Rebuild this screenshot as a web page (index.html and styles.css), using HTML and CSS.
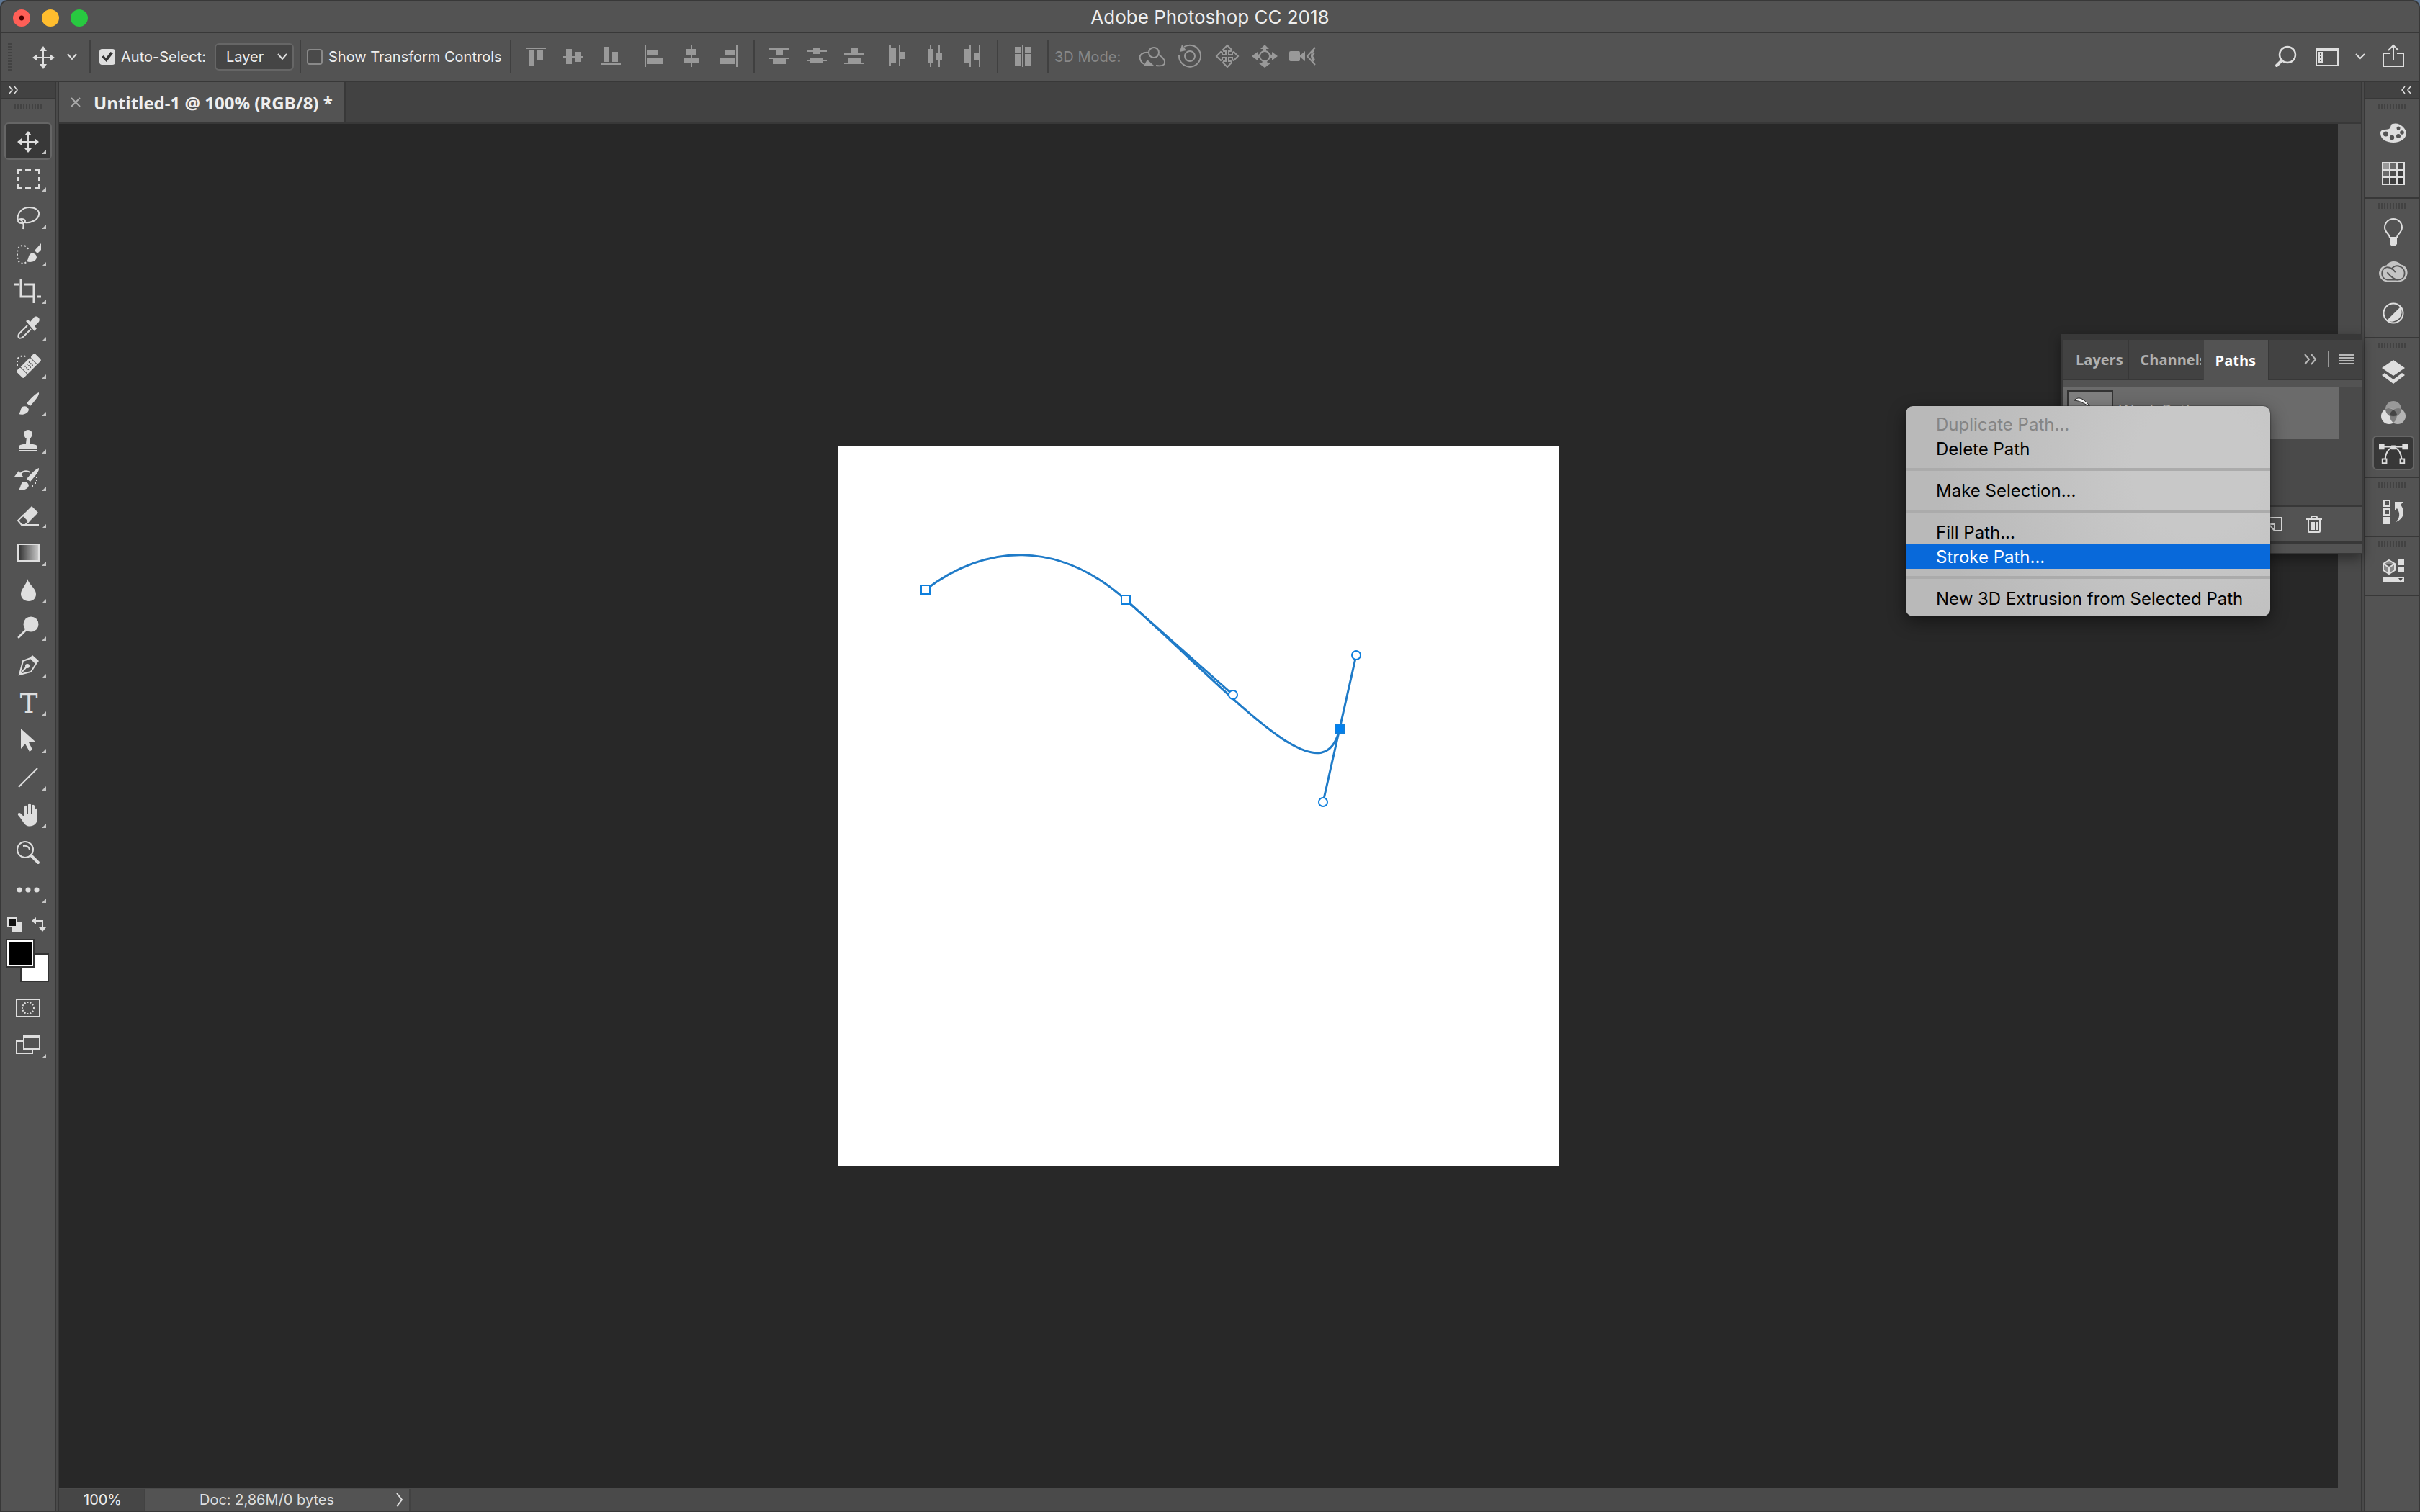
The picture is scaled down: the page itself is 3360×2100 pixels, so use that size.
FILE: index.html
```
<!DOCTYPE html>
<html lang="en">
<head>
    <meta charset="UTF-8">
    <meta name="viewport" content="width=device-width, initial-scale=1.0">
    <title>Adobe Photoshop CC 2018</title>
    <link rel="stylesheet" href="styles.css">
</head>
<body>
<div class="window">

    <header class="titlebar">
        <div class="lights">
            <button class="light close" aria-label="Close"></button>
            <button class="light minimize" aria-label="Minimize"></button>
            <button class="light maximize" aria-label="Zoom"></button>
        </div>
        <h1>Adobe Photoshop CC 2018</h1>
    </header>

    <!-- Options bar -->
    <div class="options">
        <div class="grip-side"></div>
        <button class="preset" aria-label="Move tool presets">
            <svg width="40" height="40" viewBox="0 0 40 40"><path d="M20 9v24M8 21h24" stroke="#dedede" stroke-width="2"/><path d="M20 5l5 7H15zM20 37l5-7H15zM5 21l7-5v10zM36 21l-7-5v10z" fill="#dedede"/></svg>
            <svg width="16" height="12" viewBox="0 0 16 12"><path d="M2 2l6 7 6-7" fill="none" stroke="#dedede" stroke-width="2"/></svg>
        </button>
        <div class="opt-group auto">
            <label class="check"><input type="checkbox" checked>Auto-Select:</label>
            <div class="picker">
                <select aria-label="Auto-select target">
                    <option>Layer</option>
                    <option>Group</option>
                </select>
                <svg width="16" height="12" viewBox="0 0 16 12"><path d="M2 2l6 7 6-7" fill="none" stroke="#dedede" stroke-width="2"/></svg>
            </div>
        </div>
        <div class="opt-group transform">
            <label class="check"><input type="checkbox">Show Transform Controls</label>
        </div>
        <div class="opt-group icons">
            <div class="icon-set">
                <button aria-label="Align top edges"><svg viewBox="0 0 40 40"><path d="M6 7h28v2H6zM10 11h8v21h-8zM22 11h8v14h-8z"/></svg></button>
                <button aria-label="Align vertical centers"><svg viewBox="0 0 40 40"><path d="M6 19h28v2H6zM10 9h8v21h-8zM22 13h8v14h-8z"/></svg></button>
                <button aria-label="Align bottom edges"><svg viewBox="0 0 40 40"><path d="M6 29h28v2H6zM10 6h8v21h-8zM22 13h8v14h-8z"/></svg></button>
            </div>
            <div class="icon-set">
                <button aria-label="Align left edges"><svg viewBox="0 0 40 40"><path d="M7 4h2v30H7zM11 10h14v8H11zM11 22h21v8H11z"/></svg></button>
                <button aria-label="Align horizontal centers"><svg viewBox="0 0 40 40"><path d="M19 4h2v30h-2zM13 9h14v8H13zM9 21h21v8H9z"/></svg></button>
                <button aria-label="Align right edges"><svg viewBox="0 0 40 40"><path d="M30 4h2v30h-2zM14 10h14v8H14zM7 22h21v8H7z"/></svg></button>
            </div>
        </div>
        <div class="opt-group icons">
            <div class="icon-set">
                <button aria-label="Distribute top edges"><svg viewBox="0 0 40 40"><path d="M6 8h28v2H6zM15 10h10v7H15zM6 21h28v2H6zM11 23h18v7H11z"/></svg></button>
                <button aria-label="Distribute vertical centers"><svg viewBox="0 0 40 40"><path d="M6 11h28v2H6zM15 8h10v8H15zM6 24h28v2H6zM11 21h18v8H11z"/></svg></button>
                <button aria-label="Distribute bottom edges"><svg viewBox="0 0 40 40"><path d="M6 15h28v2H6zM15 8h10v7H15zM6 28h28v2H6zM11 21h18v7H11z"/></svg></button>
            </div>
            <div class="icon-set">
                <button aria-label="Distribute left edges"><svg viewBox="0 0 40 40"><path d="M9 3h2v30H9zM11 8h7v20h-7zM22 3h2v30h-2zM24 13h7v10h-7z"/></svg></button>
                <button aria-label="Distribute horizontal centers"><svg viewBox="0 0 40 40"><path d="M13 4h2v30h-2zM10 9h8v20h-8zM25 4h2v30h-2zM22 14h8v10h-8z"/></svg></button>
                <button aria-label="Distribute right edges"><svg viewBox="0 0 40 40"><path d="M16 4h2v30h-2zM9 9h7v20H9zM29 4h2v30h-2zM22 14h7v10h-7z"/></svg></button>
            </div>
        </div>
        <div class="opt-group icons">
            <button aria-label="Auto-align layers"><svg viewBox="0 0 40 40"><path d="M19 4h2v30h-2zM9 6h8v8H9zM9 16h8v17H9zM23 6h8v8h-8zM23 16h8v17h-8z"/></svg></button>
        </div>
        <div class="opt-group icons mode">
            <span class="mode-label">3D Mode:</span>
            <button aria-label="Orbit"><svg viewBox="0 0 40 40"><g fill="none" stroke="#999" stroke-width="2"><circle cx="22" cy="14" r="7"/><path d="M15 14c-8-1-14 3-12 9 1 4 3 6 6 7M29 17c6 4 9 8 8 12-1 3-5 4-12 3"/></g><path d="M13 24l9 8H8z"/></svg></button>
            <button aria-label="Roll"><svg viewBox="0 0 40 40"><g fill="none" stroke="#999" stroke-width="2"><circle cx="20" cy="19" r="7"/><path d="M12 6a15 15 0 1 1-7 12"/></g><path d="M9 3l6 8-9 2z"/></svg></button>
            <button aria-label="Pan"><svg viewBox="0 0 40 40"><path d="M20 4l6 6-1 2h-3v5h5v-3l2-1 6 6-6 6-2-1v-3h-5v5h3l1 2-6 6-6-6 1-2h3v-5h-5v3l-2 1-6-6 6-6 2 1v3h5v-5h-3l-1-2z" fill="none" stroke="#999" stroke-width="2"/></svg></button>
            <button aria-label="Slide"><svg viewBox="0 0 40 40"><circle cx="20" cy="19" r="7" fill="none" stroke="#999" stroke-width="2"/><path d="M20 3l6 6h-4v3h-4V9h-4zM2 19l8-6v4l4-1v6l-4-1v4zM38 19l-8-6v4l-4-1v6l4-1v4zM20 35l-8-6h4l1-3h6l1 3h4z"/></svg></button>
            <button aria-label="Zoom camera"><svg viewBox="0 0 40 40"><rect x="2" y="12" width="15" height="14" rx="2"/><path d="M17 18l7-6v14l-7-6z"/><path d="M38 7L27 19l11 12M36 11c-4 5-4 10 0 15M37 14l-3 5 3 5" fill="none" stroke="#999" stroke-width="2"/></svg></button>
        </div>
        <div class="opt-right">
            <button aria-label="Search"><svg width="36" height="36" viewBox="0 0 36 36" fill="none" stroke="#dedede"><circle cx="19" cy="15" r="11" stroke-width="2.5"/><path d="M11 23l-7 7" stroke-width="4" stroke-linecap="round"/></svg></button>
            <button aria-label="Workspace"><svg width="36" height="36" viewBox="0 0 36 36"><path d="M3 8h30v22H3z" fill="none" stroke="#dedede" stroke-width="2"/><path d="M2 5h32v5H2zM6 11h6v15H6z" fill="#dedede"/><path d="M8 13h2v2H8zM8 17h2v3H8zM8 22h2v2H8z" fill="#535353"/></svg></button>
            <button aria-label="Workspace menu"><svg width="16" height="12" viewBox="0 0 16 12"><path d="M2 2l6 6 6-6" fill="none" stroke="#dedede" stroke-width="2"/></svg></button>
            <button aria-label="Share"><svg width="36" height="36" viewBox="0 0 36 36" fill="none" stroke="#dedede" stroke-width="2"><path d="M13 13H4v18h28V13h-9M18 22V3M11 9l7-7 7 7"/></svg></button>
        </div>
    </div>

    <div class="workspace">

        <!-- Tools -->
        <aside class="tools">
            <div class="strip-head"><svg width="14" height="12" viewBox="0 0 14 12"><path d="M1 1l4 5-4 5M8 1l4 5-4 5" fill="none" stroke="#dedede" stroke-width="1.5"/></svg></div>
            <div class="grip"></div>
            <div class="tool-list">
                <button class="tool more active" aria-label="Move"><svg viewBox="0 0 40 40"><path d="M20 9v24M8 21h24" stroke="#dedede" stroke-width="2"/><path d="M20 6l5 6H15zM20 36l5-6H15zM5 21l6-5v10zM35 21l-6-5v10z"/></svg></button>
                <button class="tool more" aria-label="Rectangular marquee"><svg viewBox="0 0 40 40"><path d="M6 14V8h6M16 8h8M29 8h6v6M35 18v6M35 27v6h-6M24 33h-8M12 33H6v-6M6 24v-6" fill="none" stroke="#dedede" stroke-width="2"/></svg></button>
                <button class="tool more" aria-label="Lasso"><svg viewBox="0 0 40 40" fill="none" stroke="#dedede" stroke-width="2"><path d="M6 26C4 17 11 8 22 8c8 0 14 4 13 10-1 7-10 12-20 11"/><ellipse cx="11" cy="27" rx="5" ry="3"/><path d="M9 25c3 1 6 6 4 13"/></svg></button>
                <button class="tool more" aria-label="Quick selection"><svg viewBox="0 0 40 40"><path d="M20 14c-2-5-7-6-11-4-4 3-4 7-4 12s1 9 4 11c3 1 6 1 9-1" fill="none" stroke="#dedede" stroke-width="2" stroke-dasharray="2 3"/><path d="M38 6v9l-5 5-4-4zM18 31c3-3 2-9 6-11 5-1 8 2 8 6-2 6-9 7-14 5z"/></svg></button>
                <button class="tool more" aria-label="Crop"><svg viewBox="0 0 40 40"><path d="M1 11h6M10 4v24h17M32 28h6M14 11h14v26" fill="none" stroke="#dedede" stroke-width="3"/></svg></button>
                <button class="tool more" aria-label="Eyedropper"><svg viewBox="0 0 40 40"><path d="M19 16L8 27c-2 2-2 5-1 6s4 1 6-1l11-11" fill="none" stroke="#dedede" stroke-width="2"/><path d="M17 10l3-2 3 3 5-6c4-4 10 1 7 6l-6 6 3 3-3 4z"/></svg></button>
                <button class="tool more" aria-label="Healing brush"><svg viewBox="0 0 40 40"><g transform="rotate(-45 21 20)"><rect x="3" y="13" width="8" height="14" rx="2"/><rect x="12" y="13" width="18" height="14"/><rect x="31" y="13" width="8" height="14" rx="2"/><g fill="#535353"><circle cx="17" cy="17" r="1"/><circle cx="21" cy="17" r="1"/><circle cx="25" cy="17" r="1"/><circle cx="17" cy="20" r="1"/><circle cx="21" cy="20" r="1"/><circle cx="25" cy="20" r="1"/><circle cx="17" cy="23" r="1"/><circle cx="21" cy="23" r="1"/><circle cx="25" cy="23" r="1"/></g></g><path d="M5 20V12c1-5 9-8 14-3" fill="none" stroke="#dedede" stroke-width="2" stroke-dasharray="2 3"/></svg></button>
                <button class="tool more" aria-label="Brush"><svg viewBox="0 0 40 40"><path d="M35 5c1 4-5 11-12 19l-5-4C24 13 31 6 35 5zM7 35c3-3 2-7 5-10 4-2 8 0 9 4-1 6-9 8-14 6z"/></svg></button>
                <button class="tool more" aria-label="Clone stamp"><svg viewBox="0 0 40 40"><circle cx="20" cy="11" r="6"/><path d="M18 15h4l1 9 8 2q2 1 2 5H7q0-4 2-5l8-2zM8 33h24v2H8z"/></svg></button>
                <button class="tool more" aria-label="History brush"><svg viewBox="0 0 40 40"><path d="M35 6c1 4-5 11-12 19l-5-4C24 14 31 7 35 6zM7 36c3-3 2-7 5-10 4-2 8 0 9 4-1 6-9 8-14 6zM1 18l6-8 6 8z"/><path d="M9 14c4-4 9-5 14-2" fill="none" stroke="#dedede" stroke-width="2"/><path d="M31 18h2v2h-2zM31 22h2v2h-2zM29 26h2v2h-2zM25 30h2v2h-2z"/></svg></button>
                <button class="tool more" aria-label="Eraser"><svg viewBox="0 0 40 40"><path d="M25 7l9 9-13 13-9-9z"/><path d="M14 19l-8 8 5 6h5l5-5M11 33h24" fill="none" stroke="#dedede" stroke-width="2"/></svg></button>
                <button class="tool more" aria-label="Gradient"><svg viewBox="0 0 40 40"><defs><linearGradient id="ramp"><stop offset="0" stop-color="#2c2c2c"/><stop offset="1" stop-color="#ccc"/></linearGradient></defs><rect x="6" y="8" width="29" height="23" fill="url(#ramp)" stroke="#dedede" stroke-width="2"/></svg></button>
                <button class="tool more" aria-label="Blur"><svg viewBox="0 0 40 40"><path d="M19 4c2 8 12 13 12 21 0 6-4 10-10 10s-11-4-11-10C10 18 18 12 19 4z"/></svg></button>
                <button class="tool more" aria-label="Dodge"><svg viewBox="0 0 40 40"><circle cx="24" cy="15" r="10.5"/><path d="M18 22L7 33" stroke="#dedede" stroke-width="3" stroke-linecap="round"/></svg></button>
                <button class="tool more" aria-label="Pen"><svg viewBox="0 0 40 40"><path d="M26 9l-13 5L8 33l16-4 7-11M8 33l11-12" fill="none" stroke="#dedede" stroke-width="2"/><circle cx="19" cy="21" r="3"/><path d="M26 6l9 8-4 5-9-9z"/></svg></button>
                <button class="tool more" aria-label="Type"><svg viewBox="0 0 40 40"><text x="21" y="34" class="type-glyph">T</text></svg></button>
                <button class="tool more" aria-label="Path selection"><svg viewBox="0 0 40 40"><path d="M10 4l20 18-9 1 5 10-4 3-6-11-6 7z"/></svg></button>
                <button class="tool more" aria-label="Line"><svg viewBox="0 0 40 40"><path d="M7 33L33 7" stroke="#dedede" stroke-width="2"/></svg></button>
                <button class="tool more" aria-label="Hand"><svg viewBox="0 0 40 40"><path d="M17 34c-4-3-6-9-11-14-1-3 2-4 4-2l5 5V9c0-3 4-3 4 0v10h1V6c0-3 4-3 4 0v13h1V8c0-3 4-3 4 0v12h1v-7c0-3 3-3 3 0v12c0 9-10 13-16 9z"/></svg></button>
                <button class="tool" aria-label="Zoom"><svg viewBox="0 0 40 40" fill="none" stroke="#dedede"><circle cx="16" cy="16" r="11" stroke-width="2"/><path d="M13 11c5-1 8 1 9 5" stroke-width="2"/><path d="M24 24l10 10" stroke-width="4" stroke-linecap="round"/></svg></button>
                <button class="tool more" aria-label="Edit toolbar"><svg viewBox="0 0 40 40"><circle cx="8" cy="20" r="3.5"/><circle cx="20" cy="20" r="3.5"/><circle cx="32" cy="20" r="3.5"/></svg></button>
            </div>
            <div class="color-actions">
                <button aria-label="Default colors"><svg width="20" height="20" viewBox="0 0 20 20"><path d="M6 6h14v14H6z" fill="#dedede"/><path d="M1 1h12v12H1z" fill="#111" stroke="#dedede" stroke-width="2"/></svg></button>
                <button aria-label="Switch colors"><svg width="20" height="20" viewBox="0 0 20 20"><path d="M4 5h11v11" fill="none" stroke="#dedede" stroke-width="2"/><path d="M0 5l6-5v10zM15 20l-5-6h10z" fill="#dedede"/></svg></button>
            </div>
            <div class="swatches">
                <button class="swatch back" aria-label="Background color"></button>
                <button class="swatch fore" aria-label="Foreground color"></button>
            </div>
            <button class="tool" aria-label="Quick mask"><svg viewBox="0 0 40 40" fill="none" stroke="#dedede" stroke-width="2"><path d="M4 8h32v24H4z"/><circle cx="20" cy="20" r="8" stroke-dasharray="2 2"/></svg></button>
            <button class="tool more" aria-label="Screen mode"><svg viewBox="0 0 40 40" fill="none" stroke="#dedede" stroke-width="2"><path d="M14 14H4v17h22v-5M4 13h10M14 7h22v18H14z"/><path d="M14 8h22" stroke-width="3"/></svg></button>
        </aside>

        <!-- Document -->
        <main class="document">
            <div class="doc-tabs">
                <div class="doc-tab">
                    <button aria-label="Close document"><svg width="14" height="14" viewBox="0 0 14 14"><path d="M1 1l12 12M13 1L1 13" stroke="#aaa" stroke-width="2"/></svg></button>
                    <span>Untitled-1 @ 100% (RGB/8) *</span>
                </div>
            </div>
            <div class="stage">
                <svg class="page" viewBox="0 0 1000 1000">
                    <g class="curve">
                        <path d="M121 200C205 137 304 130 399 214C548 346 673 495 696 393"/>
                        <path d="M399 214L548 346M719 291L673 495"/>
                    </g>
                    <g class="anchors">
                        <rect x="115" y="194" width="12" height="12"/>
                        <rect x="393" y="208" width="12" height="12"/>
                        <rect x="690" y="387" width="12" height="12" class="selected"/>
                        <circle cx="548" cy="346" r="6"/>
                        <circle cx="719" cy="291" r="6"/>
                        <circle cx="673" cy="495" r="6"/>
                    </g>
                </svg>
            </div>
            <div class="scroll-track"></div>
            <footer class="status">
                <input class="zoom" type="text" value="100%" aria-label="Zoom level">
                <button class="doc-info"><span>Doc: 2,86M/0 bytes</span><svg width="10" height="20" viewBox="0 0 10 20"><path d="M1 1l7 9-7 9" fill="none" stroke="#dedede" stroke-width="2"/></svg></button>
            </footer>
        </main>

        <!-- Collapsed panel dock -->
        <aside class="dock">
            <div class="strip-head right"><svg width="14" height="12" viewBox="0 0 14 12"><path d="M5 1L1 6l4 5M13 1L9 6l4 5" fill="none" stroke="#dedede" stroke-width="1.5"/></svg></div>
            <div class="dock-group">
                <div class="grip"></div>
                <button aria-label="Color"><svg viewBox="0 0 40 40"><path fill-rule="evenodd" d="M19 7c-3 0-2 5-5 7-4 2-12-1-12 6 0 8 8 13 18 13s18-6 18-13S28 4 19 7z"/><g fill="#535353"><circle cx="9.500" cy="21" r="3.500"/><circle cx="18" cy="26" r="3.200"/><circle cx="27" cy="24" r="3"/><circle cx="32" cy="19" r="2.800"/><circle cx="27" cy="13" r="2.500"/></g></svg></button>
                <button aria-label="Swatches"><svg viewBox="0 0 40 40"><path d="M4 4h32v32H4z"/><path d="M6 6h8v8H6z" fill="#999"/><path d="M16 6h8v8h-8zM6 16h8v8H6z" fill="#6a6a6a"/><path d="M26 6h8v8h-8zM16 16h8v8h-8zM6 26h8v8H6z" fill="#4c4c4c"/><path d="M26 16h8v8h-8zM16 26h8v8h-8z" fill="#3e3e3e"/><path d="M26 26h8v8h-8z" fill="#333"/></svg></button>
            </div>
            <div class="dock-group">
                <div class="grip"></div>
                <button aria-label="Learn"><svg viewBox="0 0 40 40"><path d="M15 27c0-5-7-7-7-14a12 12 0 0 1 24 0c0 7-7 9-7 14z" fill="none" stroke="#dedede" stroke-width="2"/><path d="M15 27h10v9l-3 3h-4l-3-3z"/></svg></button>
                <button aria-label="Libraries"><svg viewBox="-1 0 42 40"><path d="M10 9C15 1 27 2 31 8c8 1 12 10 8 18-2 5-7 7-12 7H12C4 33-1 27-1 20 0 13 5 9 10 9z" fill="#c4c4c4"/><g fill="none" stroke="#555" stroke-width="2"><path d="M23 19c-4-5-8-8-13-7-9 2-9 17 1 18h16c12 0 12-16 3-19-6-3-11 0-13 4"/><path d="M11 19c4 5 9 11 16 11"/></g></svg></button>
                <button aria-label="Adjustments"><svg viewBox="0 0 40 40"><circle cx="20" cy="20" r="13.500" fill="none" stroke="#dedede" stroke-width="2"/><path d="M11 30L30 11a14 14 0 0 1-19 19z"/></svg></button>
            </div>
            <div class="dock-group">
                <div class="grip"></div>
                <button aria-label="Layers"><svg viewBox="0 0 40 40"><path d="M20 3l16 11-16 11L4 14zM4 24l4-3 12 9 12-9 4 3-16 12z"/></svg></button>
                <button aria-label="Channels"><svg viewBox="0 0 40 40"><circle cx="20" cy="15" r="11" fill="#999"/><circle cx="14" cy="25" r="11" fill="#dedede"/><circle cx="26" cy="25" r="11" fill="#b4b4b4"/><path d="M20 16a11 11 0 0 1 0 18 11 11 0 0 1 0-18z" fill="#7d7d7d"/><path d="M9 15c4-2 8-1 11 1 3-2 7-3 11-1a11 11 0 0 1-22 0z" fill="#777"/><path d="M20 16q5 4 5 8-5 2-10 0 0-4 5-8z" fill="#454545"/></svg></button>
                <button class="active" aria-label="Paths"><svg viewBox="-1 0 42 40"><path d="M4 11h32M8 31C8 22 12 13 20 12c8 1 12 10 12 19" fill="none" stroke="#dedede" stroke-width="2"/><path d="M-1 7h8v8h-8zM33 7h8v8h-8zM17 9h6v6h-6z"/><path d="M4 29h6v6H4zM30 29h6v6h-6z" fill="#383838" stroke="#dedede" stroke-width="2"/></svg></button>
            </div>
            <div class="dock-group">
                <div class="grip"></div>
                <button aria-label="History"><svg viewBox="0 0 40 40"><path d="M7 4h8v8H7zM7 16h8v8H7z" fill="none" stroke="#dedede" stroke-width="2"/><path d="M6 27h10v10H6zM22 6h12l-4 4c7 9 5 20-7 24 6-5 7-12 2-19l-3 3z"/></svg></button>
            </div>
            <div class="dock-group">
                <div class="grip"></div>
                <button aria-label="3D properties"><svg viewBox="0 0 40 40"><path d="M14 5l8 5v9l-8 5-8-5v-9zM6 10l8 5 8-5M14 15v9" fill="#888" stroke="#dedede" stroke-width="2"/><path d="M27 4h8v8h-8zM27 14h8v8h-8zM5 28h30v8H5z"/><path d="M27 30h6l-3 4z" fill="#444"/></svg></button>
            </div>
        </aside>

        <!-- Floating Paths panel -->
        <section class="panel">
            <div class="panel-tabs">
                <button class="ptab">Layers</button>
                <button class="ptab channels">Channels</button>
                <button class="ptab current">Paths</button>
                <div class="panel-actions">
                    <svg width="20" height="18" viewBox="0 0 20 18"><path d="M2 2l6 7-6 7M11 2l6 7-6 7" fill="none" stroke="#b8b8b8" stroke-width="2"/></svg>
                    <span class="bar"></span>
                    <button aria-label="Panel menu"><svg width="20" height="16" viewBox="0 0 20 16"><path d="M0 2h20M0 6h20M0 10h20M0 14h20" stroke="#b8b8b8" stroke-width="2"/></svg></button>
                </div>
            </div>
            <div class="panel-body">
                <div class="path-row">
                    <svg class="thumb" width="64" height="64" viewBox="0 0 64 64"><path d="M8 13C16 5 24 12 33 23 22 17 16 13 8 13z" fill="#fff" stroke="#222"/></svg>
                    <span class="path-name">Work Path</span>
                </div>
            </div>
            <div class="panel-foot">
                <button aria-label="New path"><svg width="24" height="24" viewBox="0 0 24 24"><path d="M3 3h18v18H11l-8-9zM3 12h8v9" fill="none" stroke="#dedede" stroke-width="2"/></svg></button>
                <button aria-label="Delete path"><svg width="24" height="26" viewBox="0 0 24 26" fill="none" stroke="#dedede" stroke-width="2"><path d="M1 6h22M8 6V4q0-2 2-2h4q2 0 2 2v2M4 6v17q0 1 1 1h14q1 0 1-1V6M9 10v11M12 10v11M16 10v11"/></svg></button>
            </div>
            <div class="panel-edge"></div>
        </section>

        <div class="menu" role="menu">
            <button role="menuitem" disabled>Duplicate Path...</button>
            <button role="menuitem">Delete Path</button>
            <hr>
            <button role="menuitem">Make Selection...</button>
            <hr>
            <button role="menuitem">Fill Path...</button>
            <button role="menuitem" class="hover">Stroke Path...</button>
            <hr>
            <button role="menuitem">New 3D Extrusion from Selected Path</button>
        </div>
    </div>
</div>
</body>
</html>
```
FILE: styles.css
```
* {
    box-sizing: border-box;
}
body {
    margin: 0;
    background-color: #5f7896;
    font-family: Inter, "Liberation Sans", sans-serif;
    font-size: 20px;
    color: #eee;
}
button {
    display: flex;
    align-items: center;
    justify-content: center;
    padding: 0;
    border: none;
    background: none;
    color: inherit;
    font: inherit;
}
svg {
    display: block;
    flex: none;
}
.window {
    display: flex;
    flex-direction: column;
    height: 100vh;
    border: 2px solid #383838;
    border-radius: 10px 10px 0 0;
    background-color: #535353;
    overflow: hidden;
}

/* Title bar */
.titlebar {
    display: grid;
    grid-template-columns: 1fr auto 1fr;
    align-items: center;
    height: 44px;
    flex: none;
    border-bottom: 2px solid #383838;
}
.titlebar h1 {
    margin: 0;
    font-size: 26px;
    font-weight: 400;
}
.lights {
    display: flex;
    gap: 16px;
    padding: 4px 0 0 16px;
}
.light {
    width: 24px;
    height: 24px;
    border-radius: 50%;
}
.close {
    background: radial-gradient(circle, #4d0000 0 3px, #ff5f57 4px);
}
.minimize {
    background-color: #ffbd2e;
}
.maximize {
    background-color: #28c940;
}

/* Options bar */
.options {
    display: flex;
    align-items: center;
    height: 68px;
    flex: none;
    padding-left: 9px;
    border-bottom: 2px solid #383838;
}
.grip-side {
    width: 5px;
    height: 38px;
    background: repeating-linear-gradient(#424242 0 2px, transparent 2px 4px);
}
.preset {
    gap: 12px;
    margin: 0 16px 0 24px;
}
.opt-group {
    display: flex;
    align-items: center;
    gap: 8px;
    height: 46px;
    padding: 0 8px;
    border-left: 2px solid #404040;
}
.auto {
    width: 292px;
    padding-left: 12px;
    justify-content: space-between;
}
.transform {
    width: 292px;
}
.check {
    display: flex;
    align-items: center;
    gap: 8px;
    white-space: nowrap;
}
.check input {
    appearance: none;
    display: grid;
    place-items: center;
    width: 22px;
    height: 22px;
    margin: 0;
    border: 2px solid #8a8a8a;
    border-radius: 4px;
    background-color: #4a4a4a;
}
.check input:checked {
    border-color: #dedede;
    background-color: #dedede;
}
.check input:checked::after {
    content: "";
    width: 16px;
    height: 14px;
    background-color: #333;
    clip-path: polygon(0 50%, 18% 36%, 38% 62%, 78% 0, 100% 14%, 42% 100%);
}
.picker {
    display: grid;
    align-items: center;
    width: 110px;
}
.picker select {
    grid-area: 1 / 1;
    appearance: none;
    width: 100%;
    height: 38px;
    padding: 0 14px;
    border: 2px solid #666;
    border-radius: 6px;
    background-color: #454545;
    color: #eee;
    font: inherit;
}
.picker svg {
    grid-area: 1 / 1;
    justify-self: end;
    margin-right: 8px;
    pointer-events: none;
}
.icon-set {
    display: flex;
}
.icons button {
    width: 52px;
    height: 44px;
}
.icons svg {
    width: 40px;
    height: 40px;
    fill: #999;
}
.mode {
    gap: 0;
}
.mode-label {
    width: 110px;
    color: #888;
}
.opt-right {
    display: flex;
    align-items: center;
    gap: 20px;
    margin-left: auto;
    padding-right: 17px;
}

/* Workspace */
.workspace {
    position: relative;
    display: flex;
    flex: 1;
    min-height: 0;
    background-color: #4a4a4a;
}
.tools {
    display: flex;
    flex-direction: column;
    width: 76px;
    flex: none;
    border-right: 2px solid #383838;
    background-color: #535353;
}
.strip-head {
    display: flex;
    align-items: center;
    height: 24px;
    flex: none;
    padding: 0 10px;
    border-bottom: 2px solid #383838;
    background-color: #424242;
}
.right {
    justify-content: flex-end;
}
.grip {
    width: 38px;
    height: 8px;
    flex: none;
    margin: 6px auto 5px;
    background: repeating-linear-gradient(90deg, #424242 0 2px, transparent 2px 4px);
}
.tool-list {
    padding-top: 13px;
}
.tool {
    position: relative;
    width: 66px;
    height: 52px;
    flex: none;
    margin: 0 4px;
    border: 2px solid transparent;
    border-radius: 6px;
}
.tool svg {
    width: 40px;
    height: 40px;
    fill: #dedede;
    overflow: visible;
}
.tool svg[fill="none"] {
    fill: none;
}
.active {
    border: 2px solid #666;
    border-radius: 6px;
    background-color: #383838;
}
.more::after {
    content: "";
    position: absolute;
    right: 6px;
    bottom: 6px;
    width: 6px;
    height: 6px;
    background-color: #c4c4c4;
    clip-path: polygon(100% 0, 100% 100%, 0 100%);
}
.type-glyph {
    font-family: "DejaVu Serif", serif;
    font-size: 37px;
    text-anchor: middle;
}
.color-actions {
    display: flex;
    justify-content: space-between;
    padding: 12px 12px 10px 8px;
}
.swatches {
    display: grid;
    grid-template: repeat(3, 20px) / repeat(3, 20px);
    padding: 0 0 10px 6px;
}
.swatch {
    border: 2px solid #333;
}
.back {
    grid-area: 2 / 2 / 4 / 4;
    background-color: #fff;
}
.fore {
    grid-area: 1 / 1 / 3 / 3;
    background-color: #000;
    box-shadow: inset 0 0 0 2px #fff;
}

/* Document window */
.document {
    display: grid;
    grid-template: 58px 1fr 32px / 1fr 32px;
    flex: 1;
    margin: 0 2px;
    border: solid #383838;
    border-width: 0 2px;
}
.doc-tabs {
    grid-column: 1 / 3;
    display: flex;
    border-bottom: 2px solid #383838;
    background-color: #424242;
}
.doc-tab {
    display: flex;
    align-items: center;
    gap: 18px;
    padding: 0 16px;
    border-right: 2px solid #383838;
    background-color: #535353;
    font-family: "Open Sans", sans-serif;
    font-size: 24px;
    font-weight: 700;
}
.stage {
    display: grid;
    place-items: center;
    min-height: 0;
    background-color: #282828;
}
.page {
    width: 1000px;
    background-color: #fff;
}
.curve {
    fill: none;
    stroke: #1f7bc8;
    stroke-width: 3;
}
.anchors {
    fill: #fff;
    stroke: #0f7fdc;
    stroke-width: 2;
}
.selected {
    fill: #0080f0;
}
.status {
    grid-column: 1 / 3;
    display: flex;
    padding-top: 2px;
}
.zoom {
    width: 120px;
    padding: 0 0 0 34px;
    border: none;
    border-right: 2px solid #424242;
    background-color: #464646;
    color: #eee;
    font: inherit;
}
.doc-info {
    width: 368px;
    justify-content: space-between;
    padding: 0 8px 0 75px;
    border-right: 2px solid #424242;
    background-color: #535353;
    color: #dedede;
}

/* Dock */
.dock {
    width: 76px;
    flex: none;
    border-left: 2px solid #383838;
    background-color: #535353;
}
.dock-group {
    display: flow-root;
    padding-bottom: 1px;
    border-bottom: 2px solid #383838;
}
.dock-group button {
    width: 58px;
    height: 48px;
    margin: 0 10px 8px;
}
.dock-group .grip {
    margin-bottom: 9px;
}
.dock-group svg {
    width: 40px;
    height: 40px;
    fill: #dedede;
}

/* Paths panel */
.panel {
    position: absolute;
    top: 350px;
    right: 78px;
    display: flex;
    flex-direction: column;
    width: 418px;
    height: 306px;
    border: solid #383838;
    border-width: 8px 0 2px 2px;
    background-color: #535353;
    box-shadow: 0 6px 16px rgba(0, 0, 0, 0.4);
    font-family: "Open Sans", sans-serif;
}
.panel-tabs {
    display: flex;
    height: 56px;
    flex: none;
    background-color: #424242;
}
.ptab {
    padding: 0 6px 0 18px;
    border-right: 2px solid #383838;
    border-bottom: 2px solid #383838;
    color: #b0b0b0;
    font-size: 20px;
    font-weight: 700;
}
.channels {
    display: block;
    width: 104px;
    padding: 0 0 0 16px;
    border-right: 4px solid #424242;
    overflow: hidden;
    white-space: nowrap;
}
.current {
    padding: 0 17px 0 16px;
    border-bottom: none;
    background-color: #535353;
    color: #fff;
}
.panel-actions {
    display: flex;
    align-items: center;
    justify-content: flex-end;
    gap: 14px;
    flex: 1;
    padding-right: 12px;
    border-bottom: 2px solid #383838;
}
.bar {
    width: 2px;
    height: 22px;
    background-color: #999;
}
.panel-body {
    flex: 1;
    margin-top: 10px;
    padding-right: 32px;
    border-bottom: 2px solid #383838;
    background-color: #4a4a4a;
}
.path-row {
    display: flex;
    align-items: center;
    gap: 8px;
    height: 72px;
    padding-left: 6px;
    background-color: #6b6b6b;
}
.path-name {
    padding-bottom: 10px;
    font-size: 22px;
}
.thumb {
    border: 2px solid #333;
    background-color: #808080;
}
.panel-foot {
    display: flex;
    align-items: center;
    justify-content: flex-end;
    gap: 30px;
    height: 52px;
    padding-right: 55px;
    border-bottom: 4px solid #383838;
}
.panel-edge {
    height: 12px;
}

/* Context menu */
.menu {
    position: absolute;
    top: 450px;
    right: 206px;
    width: 506px;
    padding: 8px 0;
    border-radius: 10px;
    background: radial-gradient(circle at 80% 30%, #c8c8c8 20%, #b9b9b9 80%);
    box-shadow: 0 8px 24px rgba(0, 0, 0, 0.45), 0 0 2px #222;
    color: #000;
    font-size: 24px;
}
.menu button {
    justify-content: flex-start;
    width: 100%;
    height: 34px;
    padding-left: 42px;
}
.menu button:disabled {
    color: #858585;
}
.menu .hover {
    background-color: #0869da;
    color: #fff;
}
.menu hr {
    height: 4px;
    margin: 10px 0;
    border: none;
    background-color: #ababab;
}
```
